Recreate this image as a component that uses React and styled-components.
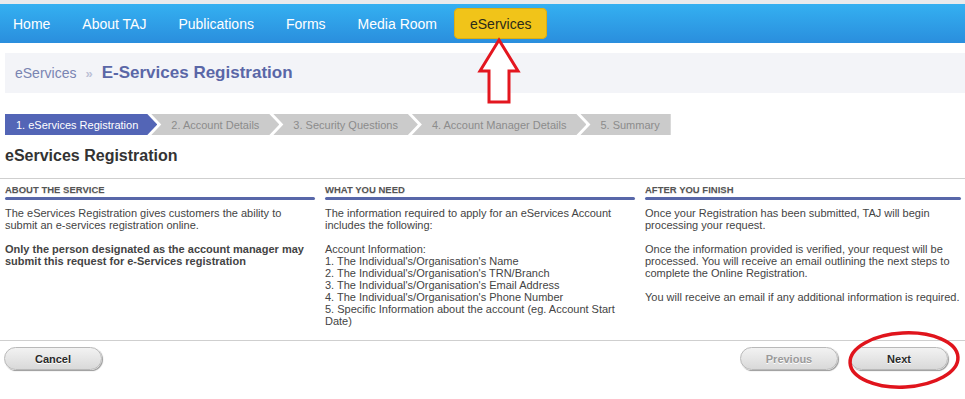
import React from 'react';
import styled, { createGlobalStyle } from 'styled-components';

const GlobalStyle = createGlobalStyle`
  body {
    margin: 0;
    background: #fff;
    font-family: "Liberation Sans", Arial, sans-serif;
  }
`;

const Page = styled.div`
  position: relative;
  width: 965px;
  height: 399px;
  overflow: hidden;
  background: #fff;
`;

const TopStrip = styled.div`
  height: 4px;
  background: #e8eaec;
`;

const NavBar = styled.nav`
  height: 39px;
  display: flex;
  align-items: center;
  gap: 2px;
  padding-left: 0;
  background: linear-gradient(#34b0f1, #2a8edd);
`;

const NavItem = styled.a`
  display: flex;
  align-items: center;
  height: 31px;
  padding: 0 ${(p) => (p.$active ? '16px' : '15px')};
  border-radius: 5px;
  font-size: 14px;
  color: ${(p) => (p.$active ? '#2b2b1a' : '#fff')};
  background: ${(p) => (p.$active ? '#f1c419' : 'transparent')};
  box-shadow: ${(p) => (p.$active ? 'inset 0 0 0 1px #dcae12' : 'none')};
  text-decoration: none;
  cursor: pointer;
  &:first-child {
    margin-left: -2px;
  }
`;

const Breadcrumb = styled.div`
  margin: 10px 0 0 5px;
  height: 40px;
  display: flex;
  align-items: center;
  gap: 9px;
  padding-left: 10px;
  background: #f3f4f8;
`;

const CrumbLink = styled.span`
  font-size: 14px;
  color: #7984b2;
`;

const CrumbSep = styled.span`
  font-size: 13px;
  font-weight: bold;
  color: #bcc1d6;
`;

const CrumbCurrent = styled.span`
  font-size: 17px;
  font-weight: bold;
  color: #5a67a7;
`;

const Steps = styled.div`
  display: flex;
  margin: 21px 0 0 5px;
  height: 21px;
`;

const Step = styled.div`
  display: flex;
  align-items: center;
  height: 21px;
  padding: 0 ${(p) => (p.$last ? '11px' : p.$first ? '19px' : '20px')} 0 ${(p) => (p.$first ? '11px' : '20px')};
  font-size: 11px;
  white-space: nowrap;
  color: ${(p) => (p.$active ? '#fff' : '#8c8c8c')};
  background: ${(p) => (p.$active ? '#5365b6' : '#cbcbcb')};
  clip-path: ${(p) =>
    p.$first
      ? 'polygon(0 0, calc(100% - 10px) 0, 100% 50%, calc(100% - 10px) 100%, 0 100%)'
      : p.$last
      ? 'polygon(0 0, 100% 0, 100% 100%, 0 100%, 10px 50%)'
      : 'polygon(0 0, calc(100% - 10px) 0, 100% 50%, calc(100% - 10px) 100%, 0 100%, 10px 50%)'};
  & + & {
    margin-left: -6px;
  }
`;

const Title = styled.h1`
  margin: 11px 0 0;
  padding: 0 0 12px 5px;
  height: 20px;
  line-height: 20px;
  font-size: 16px;
  font-weight: bold;
  color: #333;
  border-bottom: 1px solid #cfcfcf;
`;

const Columns = styled.div`
  display: grid;
  grid-template-columns: 310px 310px 316px;
  gap: 10px;
  padding: 5px 0 13px 5px;
  border-bottom: 1px solid #cfcfcf;
`;

const Column = styled.section`
  font-size: 11px;
  line-height: 12px;
  color: #444;
`;

const ColHeading = styled.h2`
  margin: 0;
  font-size: 9.5px;
  line-height: 12px;
  font-weight: bold;
  color: #555;
  text-transform: uppercase;
  text-shadow: 0 1px 0 #ddd;
`;

const ColBar = styled.div`
  height: 3px;
  margin: 1px 0 7px;
  border-radius: 2px;
  background: #5867a9;
`;

const Para = styled.p`
  margin: 0 0 12px;
  font-weight: ${(p) => (p.$bold ? 'bold' : 'normal')};
  &:last-child {
    margin-bottom: 0;
  }
`;

const Actions = styled.div`
  display: flex;
  align-items: center;
  padding: 6px 17px 0 4px;
  gap: 12px;
`;

const Spacer = styled.div`
  flex: 1;
`;

const Button = styled.button`
  width: 98px;
  height: 23px;
  border: 1px solid #b9b9b9;
  border-radius: 12px;
  background: linear-gradient(#f2f2f2, #d9d9d9);
  box-shadow: 1px 1px 1px #9a9a9a;
  font-family: "Liberation Sans", Arial, sans-serif;
  font-size: 11px;
  font-weight: bold;
  color: ${(p) => (p.$disabled ? '#9a9a9a' : '#2a2a2a')};
  text-shadow: 0 1px 0 #fff;
  cursor: pointer;
`;

const Annotation = styled.svg`
  position: absolute;
  left: 0;
  top: 0;
  pointer-events: none;
`;

const steps = [
  '1. eServices Registration',
  '2. Account Details',
  '3. Security Questions',
  '4. Account Manager Details',
  '5. Summary',
];

export default function App() {
  return (
    <Page>
      <GlobalStyle />
      <TopStrip />
      <NavBar>
        <NavItem>Home</NavItem>
        <NavItem>About TAJ</NavItem>
        <NavItem>Publications</NavItem>
        <NavItem>Forms</NavItem>
        <NavItem>Media Room</NavItem>
        <NavItem $active>eServices</NavItem>
      </NavBar>

      <Breadcrumb>
        <CrumbLink>eServices</CrumbLink>
        <CrumbSep>»</CrumbSep>
        <CrumbCurrent>E-Services Registration</CrumbCurrent>
      </Breadcrumb>

      <Steps>
        {steps.map((s, i) => (
          <Step key={s} $first={i === 0} $last={i === steps.length - 1} $active={i === 0}>
            {s}
          </Step>
        ))}
      </Steps>

      <Title>eServices Registration</Title>

      <Columns>
        <Column>
          <ColHeading>About the service</ColHeading>
          <ColBar />
          <Para>The eServices Registration gives customers the ability to submit an e-services registration online.</Para>
          <Para $bold>Only the person designated as the account manager may submit this request for e-Services registration</Para>
        </Column>
        <Column>
          <ColHeading>What you need</ColHeading>
          <ColBar />
          <Para>The information required to apply for an eServices Account includes the following:</Para>
          <Para>
            Account Information:<br />
            1. The Individual's/Organisation's Name<br />
            2. The Individual's/Organisation's TRN/Branch<br />
            3. The Individual's/Organisation's Email Address<br />
            4. The Individual's/Organisation's Phone Number<br />
            5. Specific Information about the account (eg. Account Start Date)
          </Para>
        </Column>
        <Column>
          <ColHeading>After you finish</ColHeading>
          <ColBar />
          <Para>Once your Registration has been submitted, TAJ will begin processing your request.</Para>
          <Para>Once the information provided is verified, your request will be processed. You will receive an email outlining the next steps to complete the Online Registration.</Para>
          <Para>You will receive an email if any additional information is required.</Para>
        </Column>
      </Columns>

      <Actions>
        <Button>Cancel</Button>
        <Spacer />
        <Button $disabled>Previous</Button>
        <Button>Next</Button>
      </Actions>

      <Annotation width="965" height="399" viewBox="0 0 965 399">
        <polygon
          points="499,40 518,71 509,71 509,102 489,102 489,71 480,71"
          fill="#fff"
          stroke="#e3161f"
          strokeWidth="3"
          strokeLinejoin="miter"
        />
        <ellipse
          cx="904"
          cy="360"
          rx="54"
          ry="27"
          fill="none"
          stroke="#e0141c"
          strokeWidth="3.5"
          transform="rotate(-3 904 360)"
        />
      </Annotation>
    </Page>
  );
}
